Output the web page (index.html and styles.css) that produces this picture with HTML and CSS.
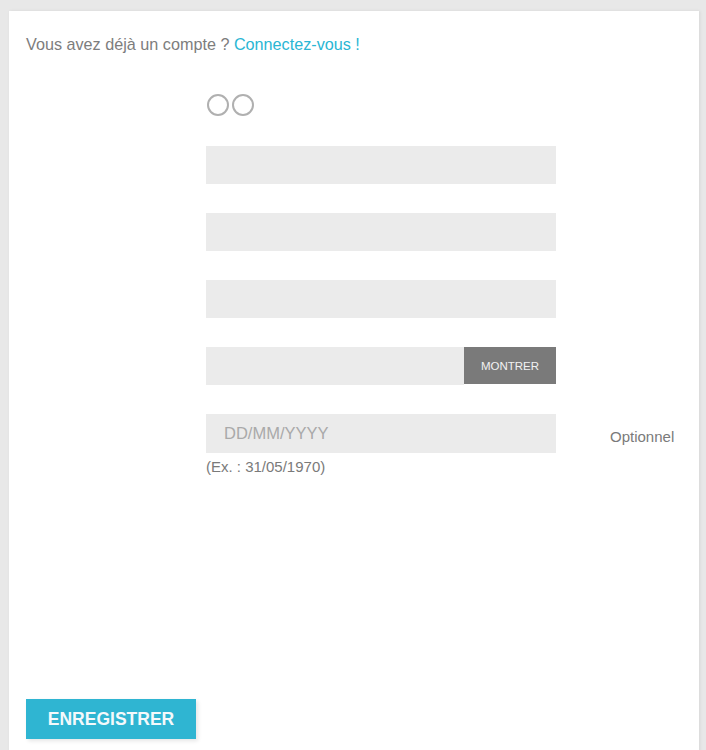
FILE: index.html
```html
<!DOCTYPE html>
<html lang="fr">
<head>
<meta charset="utf-8">
<title>Créer un compte</title>
<link rel="stylesheet" href="styles.css">
</head>
<body>
<section class="card">
  <p class="login-hint">Vous avez déjà un compte ? <a href="#" class="link">Connectez-vous !</a></p>
  <form class="form">
    <div class="row row-radio">
      <div class="label"></div>
      <div class="field radios">
        <span class="radio"></span><span class="radio"></span>
      </div>
    </div>
    <div class="row">
      <div class="label"></div>
      <div class="field"><div class="input"></div></div>
    </div>
    <div class="row">
      <div class="label"></div>
      <div class="field"><div class="input"></div></div>
    </div>
    <div class="row">
      <div class="label"></div>
      <div class="field"><div class="input"></div></div>
    </div>
    <div class="row">
      <div class="label"></div>
      <div class="field group">
        <div class="input grow"></div>
        <button type="button" class="show-btn">MONTRER</button>
      </div>
    </div>
    <div class="row">
      <div class="label"></div>
      <div class="field">
        <div class="input placeholder">DD/MM/YYYY</div>
        <div class="hint">(Ex. : 31/05/1970)</div>
      </div>
      <div class="comment">Optionnel</div>
    </div>
    <div class="footer">
      <button type="button" class="submit">ENREGISTRER</button>
    </div>
  </form>
</section>
</body>
</html>
```

FILE: styles.css
```css
html, body {
  margin: 0;
  padding: 0;
}
body {
  background: #e8e8e8;
  font-family: "Liberation Sans", Arial, sans-serif;
  color: #7a7a7a;
  height: 750px;
  overflow: hidden;
}
.card {
  margin: 11px 0 0 9px;
  width: 690px;
  min-height: 760px;
  background: #fff;
  box-sizing: border-box;
  padding: 24px 17px 0 17px;
  box-shadow: 1px 0 3px rgba(0,0,0,0.08);
}
.login-hint {
  margin: 0;
  font-size: 16.2px;
  line-height: 18px;
  color: #7d7d7d;
}
.link {
  color: #2ab6d4;
  text-decoration: none;
}
.form {
  margin-top: 41px;
}
.row {
  display: grid;
  grid-template-columns: 126px 350px auto;
  column-gap: 54px;
  margin-bottom: 29px;
}
.row-radio {
  margin-bottom: 30px;
}
.radios {
  display: flex;
  gap: 3px;
  height: 22px;
  padding-left: 1px;
}
.radio {
  width: 22px;
  height: 22px;
  box-sizing: border-box;
  border: 2px solid #b0b0b0;
  border-radius: 50%;
}
.input {
  height: 38px;
  background: #ebebeb;
  box-sizing: border-box;
}
.group {
  display: flex;
}
.grow {
  flex: 1;
}
.show-btn {
  width: 92px;
  height: 37px;
  border: 0;
  margin: 0;
  background: #7a7a7a;
  color: #f2f2f2;
  font-family: "Liberation Sans", Arial, sans-serif;
  font-size: 11.5px;
  padding: 0;
}
.placeholder {
  height: 39px;
  padding-left: 18px;
  font-size: 16.5px;
  line-height: 39px;
  color: #a9a9a9;
}
.hint {
  font-size: 15px;
  line-height: 18px;
  margin-top: 5px;
}
.comment {
  font-size: 15px;
  line-height: 18px;
  padding-top: 14px;
}
.footer {
  padding-top: 194px;
}
.submit {
  width: 170px;
  height: 40px;
  border: 0;
  background: #2fb5d2;
  color: #f4f9fb;
  font-family: "Liberation Sans", Arial, sans-serif;
  font-weight: bold;
  font-size: 17.5px;
  padding: 0;
  box-shadow: 2px 2px 4px rgba(0,0,0,0.1);
}
```
